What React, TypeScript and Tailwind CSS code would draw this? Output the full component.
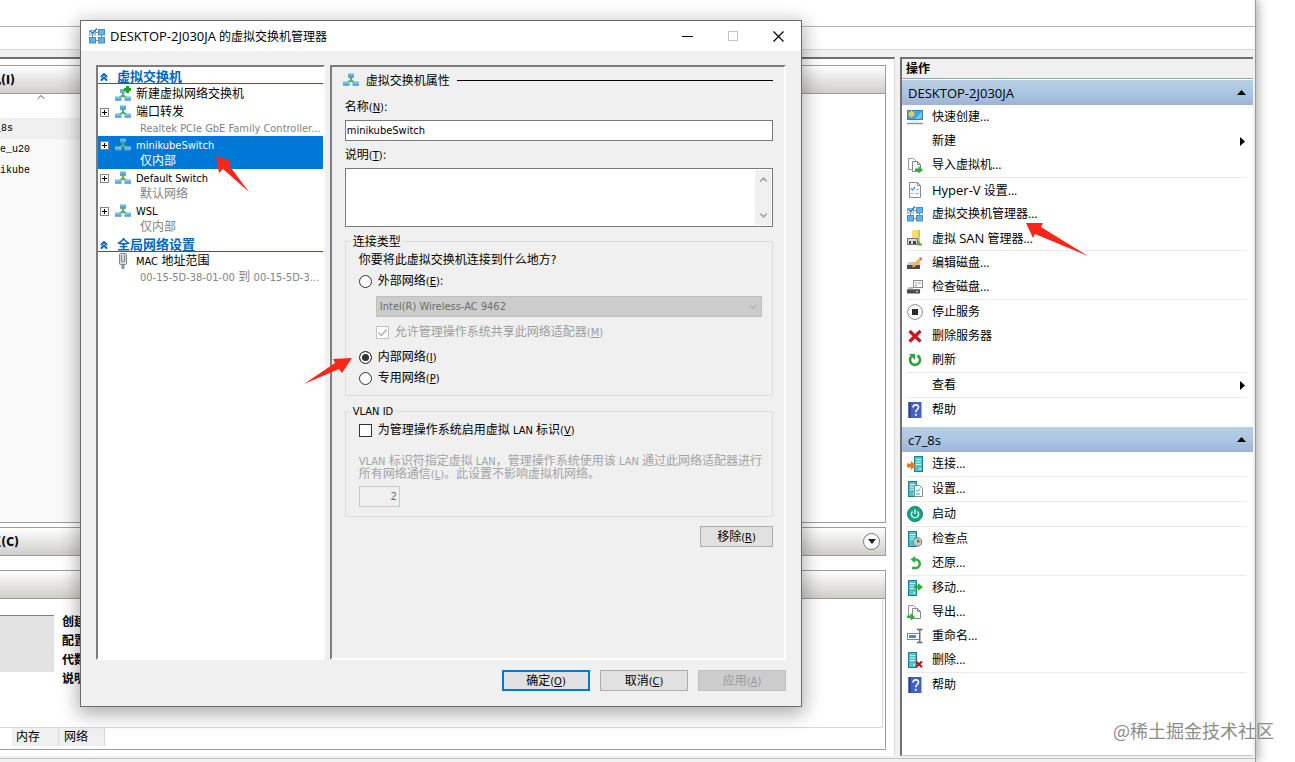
import { useState } from 'react';
import type { ReactNode } from 'react';
import { ChevronDown, ChevronUp, ChevronsUp } from 'lucide-react';

type IconProps = { className?: string };

const SwitchIcon = ({ className = 'h-4 w-4' }: IconProps) => (
  <svg viewBox="0 0 16 16" className={className}>
    <path d="M8 5v5M8 8l-3.500 3M8 8l3.500 3" stroke="#55b748" strokeWidth="2.200" fill="none" />
    <path d="M5 1.500h6v4H5z" fill="#62b4e8" />
    <path d="M5 4.500h6v1H5z" fill="#3c86ba" />
    <path d="M0 9.500h6.500v4H0zM9.500 9.500H16v4H9.500z" fill="#72bdec" />
    <path d="M0 12.500h6.500v1H0zM9.500 12.500H16v1H9.500z" fill="#3c86ba" />
  </svg>
);

const NewSwitchIcon = () => (
  <svg viewBox="0 0 16 16" className="h-4 w-4">
    <path d="M8 6v5M8 9l-3.500 3M8 9l3.500 3" stroke="#55b748" strokeWidth="2.200" fill="none" />
    <path d="M5 3h5v4H5z" fill="#62b4e8" />
    <path d="M0 10.500h6.500v4H0zM9.500 10.500H16v4H9.500z" fill="#72bdec" />
    <path d="M0 13.500h6.500v1H0zM9.500 13.500H16v1H9.500z" fill="#3c86ba" />
    <path d="M12.500 0v7M9 3.500h7" stroke="#17a81f" strokeWidth="3" />
  </svg>
);

const SwitchManagerIcon = () => (
  <svg viewBox="0 0 16 16" className="h-4 w-4">
    <path d="M3.500 7v3M12.500 7v3M6 12.500h4M6 4.500h4" stroke="#8a8a8a" />
    <rect x="0.500" y="2.500" width="6" height="4.500" fill="#fff" stroke="#7fb2d9" />
    <path d="M1.500 3l2.200 2.500L8 .5" stroke="#2a7cc0" strokeWidth="1.500" fill="none" />
    <rect x="9.500" y="1.500" width="6" height="5.500" fill="#5db3f2" stroke="#4b8cc2" />
    <rect x="0.500" y="9.500" width="6" height="5.500" fill="#5db3f2" stroke="#4b8cc2" />
    <rect x="9.500" y="9.500" width="6" height="5.500" fill="#5db3f2" stroke="#4b8cc2" />
  </svg>
);

const MacIcon = () => (
  <svg viewBox="0 0 16 16" className="h-4 w-4">
    <path d="M6.500 11h3v5h-3z" fill="#6d9cc0" />
    <rect x="4.500" y="0.500" width="7" height="11" rx="1" fill="#d5dade" stroke="#7d868d" />
    <path d="M6.500 2v6M9.500 2v6M6.500 8.500h3" stroke="#7d868d" fill="none" />
  </svg>
);

const QuickCreateIcon = () => (
  <svg viewBox="0 0 16 16" className="h-4 w-4">
    <rect x="0.500" y="1.500" width="15" height="9" fill="#36a3ea" stroke="#3b7fae" />
    <path d="M8 10l7-8v8z" fill="#6cc3f5" />
    <path d="M4.500 1v8M.5 5h8M1.700 2.200l5.600 5.600M7.300 2.200L1.700 7.800" stroke="#f0b94a" />
    <circle cx="4.500" cy="5" r="2.600" fill="#ffc94f" />
    <path d="M0 14.500h16" stroke="#8796a1" strokeWidth="1.500" />
    <path d="M4 12h8" stroke="#cfe0ea" />
  </svg>
);

const Pages = () => (
  <>
    <path d="M1.500 1.500h5l2 2v9h-7z" fill="#fafafa" stroke="#999" />
    <path d="M5.500 4.500h5l3 3v7h-8z" fill="#fff" stroke="#888" />
    <path d="M10.500 4.500v3h3" fill="none" stroke="#888" />
  </>
);

const ImportIcon = () => (
  <svg viewBox="0 0 16 16" className="h-4 w-4">
    <Pages />
    <path d="M8 11.500h3.500V9l4.500 4-4.500 3.500V14H8z" fill="#2fae3a" />
  </svg>
);

const ExportIcon = () => (
  <svg viewBox="0 0 16 16" className="h-4 w-4">
    <Pages />
    <path d="M0 11.500h3.500V9L8 13l-4.500 3.500V14H0z" fill="#2fae3a" />
  </svg>
);

const HyperVSettingsIcon = () => (
  <svg viewBox="0 0 16 16" className="h-4 w-4">
    <path d="M2.500.5h8l3 3v12h-11z" fill="#f6f9fb" stroke="#8b8b8b" />
    <path d="M10.500.5v3h3" fill="none" stroke="#8b8b8b" />
    <path d="M4 6.500l1.500 1.500L8 5" fill="none" stroke="#3f9be0" strokeWidth="1.200" />
    <path d="M9 7.500h3M4 11.500h2M8 11.500h4" stroke="#9bb8cc" />
  </svg>
);

const SanIcon = () => (
  <svg viewBox="0 0 16 16" className="h-4 w-4">
    <path d="M5 1l2-1h6v12H5z" fill="#f5df6a" />
    <path d="M11 0h2v12h-2z" fill="#e3c04a" />
    <path d="M12 12v2.500h3" stroke="#4caf3f" strokeWidth="2" fill="none" />
    <rect x="0.500" y="8.500" width="10" height="6" fill="#d9d9d9" stroke="#777" />
    <path d="M2 11h2v3H2zM6 11h3v3H6z" fill="#444" />
  </svg>
);

const EditDiskIcon = () => (
  <svg viewBox="0 0 16 16" className="h-4 w-4">
    <path d="M2 7h11l1 3H0z" fill="#c9c9c9" />
    <path d="M0 10h13v4H0z" fill="#4a4a4a" />
    <path d="M5 12.500L6 9.500l6-6 2 2-6 6z" fill="#f0b545" />
    <path d="M12 3.500l1.500-1.500 2 2L14 5.500z" fill="#d66a5c" />
  </svg>
);

const InspectDiskIcon = () => (
  <svg viewBox="0 0 16 16" className="h-4 w-4">
    <rect x="6.500" y="1.500" width="9" height="7" fill="#fff" stroke="#888" />
    <path d="M8 4h2M11 4h3M8 6.500h2" stroke="#7d93a5" />
    <path d="M2 8h4v2h8l-1 1H0z" fill="#bbb" />
    <path d="M0 10.500h13v4H0z" fill="#4a4a4a" />
    <path d="M9 12.500h2" stroke="#ddd" />
  </svg>
);

const StopIcon = () => (
  <svg viewBox="0 0 16 16" className="h-4 w-4">
    <circle cx="8" cy="8" r="7.400" fill="#fff" stroke="#8a8a8a" />
    <path d="M5 5h6v6H5z" fill="#2b2b2b" />
  </svg>
);

const RemoveIcon = () => (
  <svg viewBox="0 0 16 16" className="h-4 w-4">
    <path d="M2.500 3l11 10.500M13.500 3L2.500 13.500" stroke="#d0141e" strokeWidth="3.200" />
  </svg>
);

const RefreshIcon = () => (
  <svg viewBox="0 0 16 16" className="h-4 w-4">
    <path d="M10.500 3.500a5 5 0 1 1-6 .8" fill="none" stroke="#27a536" strokeWidth="2.600" />
    <path d="M2 2h6v6z" fill="#27a536" />
  </svg>
);

const HelpIcon = () => (
  <svg viewBox="0 0 16 16" className="h-4 w-4">
    <path d="M1.500 0h13v16h-13z" fill="#4161c4" />
    <path d="M1.500 0h2v16h-2z" fill="#2c3f8d" />
    <path d="M6 5.500C6 2 11.500 2 11.500 5.200 11.500 7.500 8.800 7.500 8.800 10.200" stroke="#fff" strokeWidth="1.600" fill="none" />
    <circle cx="8.800" cy="12.800" r="1.100" fill="#fff" />
  </svg>
);

const Server = ({ x = 0 }: { x?: number }) => (
  <>
    <rect x={x + 0.5} y="0.500" width="8" height="15" fill="#45c6cc" stroke="#1f7f92" />
    <path d={`M${x + 2} 3.500h5M${x + 2} 6h5M${x + 2} 8.500h5`} stroke="#d8f7f7" />
    <path d={`M${x + 5} 13h2`} stroke="#fff" />
  </>
);

const ConnectIcon = () => (
  <svg viewBox="0 0 16 16" className="h-4 w-4">
    <Server x={7} />
    <path d="M0 7.500h4V5l5 4.500L4 14v-2.500H0z" fill="#ee7421" />
  </svg>
);

const VmSettingsIcon = () => (
  <svg viewBox="0 0 16 16" className="h-4 w-4">
    <Server x={1} />
    <path d="M7.500 4.500h5l3 3v8h-8z" fill="#f6f9fb" stroke="#8b8b8b" />
    <path d="M9 9l1.500 1.500L13 7.500M9 13h4" fill="none" stroke="#3f9be0" />
  </svg>
);

const PowerIcon = () => (
  <svg viewBox="0 0 16 16" className="h-4 w-4">
    <circle cx="8" cy="8" r="7.500" fill="#17a589" stroke="#0f7f69" />
    <path d="M5.500 5.500a3.600 3.600 0 1 0 5 0M8 3.500V8" stroke="#fff" strokeWidth="1.300" fill="none" />
  </svg>
);

const CheckpointIcon = () => (
  <svg viewBox="0 0 16 16" className="h-4 w-4">
    <Server x={1} />
    <circle cx="10.500" cy="11" r="4.300" fill="#c9c9c9" stroke="#7a7a7a" />
    <path d="M10 11.500V8l3.500 3z" fill="#3b8a3b" />
  </svg>
);

const RevertIcon = () => (
  <svg viewBox="0 0 16 16" className="h-4 w-4">
    <path d="M6 4.500h2.500a4 4 0 0 1 0 8.500H5" fill="none" stroke="#36b03c" strokeWidth="2.600" />
    <path d="M3.500 4.500L8 1v7z" fill="#36b03c" />
  </svg>
);

const MoveIcon = () => (
  <svg viewBox="0 0 16 16" className="h-4 w-4">
    <Server x={1} />
    <path d="M7 5.500h4V3l5 4-5 4V8.500H7z" fill="#2fae3a" />
  </svg>
);

const RenameIcon = () => (
  <svg viewBox="0 0 16 16" className="h-4 w-4">
    <rect x="0.500" y="5.500" width="12" height="6" fill="#fff" stroke="#888" />
    <path d="M2 7h7v3H2z" fill="#3a8fd8" />
    <path d="M10 1.500h5.500M10 14.500h5.500M12.800 1.500v13" stroke="#666" strokeWidth="1.300" />
  </svg>
);

const DeleteVmIcon = () => (
  <svg viewBox="0 0 16 16" className="h-4 w-4">
    <Server x={1} />
    <path d="M9 9.500l6 5.500M15 9.500L9 15" stroke="#c0101c" strokeWidth="2.200" />
  </svg>
);

// Latin runs are set smaller than the Chinese text around them
const Small = ({ children }: { children: ReactNode }) => (
  <span className="text-[11px]">{children}</span>
);

const Key = ({ letter }: { letter: string }) => (
  <span className="text-[11px]">
    (<u className="underline-offset-1">{letter}</u>)
  </span>
);

type Action = {
  label: ReactNode;
  icon?: ReactNode;
  submenu?: boolean;
  last?: boolean;
};

const hostActions: Action[] = [
  { label: '快速创建...', icon: <QuickCreateIcon /> },
  { label: '新建', submenu: true },
  { label: '导入虚拟机...', icon: <ImportIcon />, last: true },
  { label: <><span className="text-[13px]">Hyper-V</span> 设置...</>, icon: <HyperVSettingsIcon /> },
  { label: '虚拟交换机管理器...', icon: <SwitchManagerIcon /> },
  { label: <>虚拟 <span className="text-[13px]">SAN</span> 管理器...</>, icon: <SanIcon />, last: true },
  { label: '编辑磁盘...', icon: <EditDiskIcon /> },
  { label: '检查磁盘...', icon: <InspectDiskIcon />, last: true },
  { label: '停止服务', icon: <StopIcon /> },
  { label: '删除服务器', icon: <RemoveIcon /> },
  { label: '刷新', icon: <RefreshIcon />, last: true },
  { label: '查看', submenu: true, last: true },
  { label: '帮助', icon: <HelpIcon /> },
];

const vmActions: Action[] = [
  { label: '连接...', icon: <ConnectIcon />, last: true },
  { label: '设置...', icon: <VmSettingsIcon />, last: true },
  { label: '启动', icon: <PowerIcon />, last: true },
  { label: '检查点', icon: <CheckpointIcon /> },
  { label: '还原...', icon: <RevertIcon />, last: true },
  { label: '移动...', icon: <MoveIcon /> },
  { label: '导出...', icon: <ExportIcon /> },
  { label: '重命名...', icon: <RenameIcon /> },
  { label: '删除...', icon: <DeleteVmIcon />, last: true },
  { label: '帮助', icon: <HelpIcon /> },
];

const ActionGroup = ({ title, actions }: { title: string; actions: Action[] }) => (
  <section>
    <h3 className="flex h-[25px] items-center justify-between bg-linear-to-b from-[#b9cfe2] via-[#abc6e5] to-[#9fb3d3] pr-[7px] pl-[6px] text-[13px]">
      {title}
      <svg viewBox="0 0 9 5" className="h-[5px] w-[9px]">
        <path d="M0 5L4.500 0 9 5z" fill="#000" />
      </svg>
    </h3>
    <ul>
      {actions.map((action, i) => (
        <li
          key={i}
          className={action.last ? 'mr-[6px] ml-[5px] border-b border-[#ebebeb]' : 'mr-[6px] ml-[5px]'}
        >
          <button className="flex h-6 w-full items-center text-left">
            <span className="mr-[9px] h-4 w-4">{action.icon}</span>
            <span className="flex-1">{action.label}</span>
            {action.submenu && (
              <svg viewBox="0 0 5 9" className="mr-[2px] h-[9px] w-[5px]">
                <path d="M0 0l5 4.500L0 9z" fill="#000" />
              </svg>
            )}
          </button>
        </li>
      ))}
    </ul>
  </section>
);

const TreeHeader = ({ children }: { children: ReactNode }) => (
  <div className="flex h-[17px] items-center border-b border-[#0a66b0] pt-[3px] text-[13px] font-bold text-[#0066c0]">
    <ChevronsUp className="mr-[7px] h-3 w-3" strokeWidth={4} />
    {children}
  </div>
);

type TreeItemProps = {
  icon: ReactNode;
  title: ReactNode;
  detail: ReactNode;
  expandable?: boolean;
  selected?: boolean;
};

const TreeItem = ({ icon, title, detail, expandable, selected }: TreeItemProps) => (
  <li className={selected ? 'bg-[#0078d7] text-white' : ''}>
    <div className="flex h-[17px] items-center pt-px pl-[2px]">
      <span className="mr-[6px] h-[9px] w-[9px]">
        {expandable && (
          <svg viewBox="0 0 9 9" className="h-[9px] w-[9px]">
            <rect x="0.500" y="0.500" width="8" height="8" fill="#fff" stroke="#848484" />
            <path d="M2 4.500h5M4.500 2v5" stroke="#000" />
          </svg>
        )}
      </span>
      {icon}
      <span className="ml-[5px]">{title}</span>
    </div>
    <p
      className={
        selected
          ? 'h-4 pl-[42px] leading-[17px] whitespace-nowrap'
          : 'h-4 pl-[42px] leading-[17px] whitespace-nowrap text-[#838383]'
      }
    >
      {detail}
    </p>
  </li>
);

const radioClass =
  'h-[13px] w-[13px] appearance-none rounded-full border border-[#333] bg-white checked:bg-[#333] checked:shadow-[inset_0_0_0_2px_white]';

const panelClass =
  'border-2 border-t-[#7d7d7d] border-r-white border-b-white border-l-[#7d7d7d]';

const SwitchManagerDialog = () => {
  const [connection, setConnection] = useState('internal');

  return (
    <div
      role="dialog"
      aria-label="虚拟交换机管理器"
      className="absolute top-5 left-20 w-[722px] border border-[#6b6b6b] bg-[#f0f0f0] shadow-[0_5px_18px_2px_rgba(0,0,0,0.33)]"
    >
      <header className="flex h-[30px] items-center bg-white pl-2 font-['Open_Sans','Noto_Sans_CJK_SC',sans-serif]">
        <SwitchManagerIcon />
        <h1 className="ml-[5px] flex-1">
          <span className="text-[13px]">DESKTOP-2J030JA</span> 的虚拟交换机管理器
        </h1>
        <button aria-label="最小化" className="flex h-full w-[45px] items-center justify-center">
          <svg viewBox="0 0 11 11" className="h-[11px] w-[11px]">
            <path d="M0 5.500h11" stroke="#000" />
          </svg>
        </button>
        <button aria-label="最大化" disabled className="flex h-full w-[45px] items-center justify-center">
          <svg viewBox="0 0 11 11" className="h-[11px] w-[11px]">
            <rect x="1.500" y="0.500" width="9" height="9" fill="none" stroke="#c4c4c4" />
          </svg>
        </button>
        <button aria-label="关闭" className="flex h-full w-[46px] items-center justify-center">
          <svg viewBox="0 0 11 11" className="h-[11px] w-[11px]">
            <path d="M.5.5l10 10M10.500.5l-10 10" stroke="#000" strokeWidth="1.200" />
          </svg>
        </button>
      </header>

      <div className="flex min-h-[609px] gap-[5px] px-[15px] pt-[14px]">
        <nav className={`${panelClass} w-[229px] bg-white`}>
          <TreeHeader>虚拟交换机</TreeHeader>
          <div className="flex h-[19px] items-center pt-px pl-[17px]">
            <NewSwitchIcon />
            <span className="ml-[5px]">新建虚拟网络交换机</span>
          </div>
          <ul>
            <TreeItem expandable icon={<SwitchIcon />} title="端口转发" detail={<Small>Realtek PCIe GbE Family Controller...</Small>} />
            <TreeItem expandable selected icon={<SwitchIcon />} title={<Small>minikubeSwitch</Small>} detail="仅内部" />
            <TreeItem expandable icon={<SwitchIcon />} title={<Small>Default Switch</Small>} detail="默认网络" />
            <TreeItem expandable icon={<SwitchIcon />} title={<Small>WSL</Small>} detail="仅内部" />
          </ul>
          <TreeHeader>全局网络设置</TreeHeader>
          <ul>
            <TreeItem
              icon={<MacIcon />}
              title={<><Small>MAC</Small> 地址范围</>}
              detail={<><Small>00-15-5D-38-01-00</Small> 到 <Small>00-15-5D-3...</Small></>}
            />
          </ul>
        </nav>

        <form className={`${panelClass} flex flex-1 flex-col pr-[11px] pl-[13px]`}>
          <div className="flex h-[26px] items-center">
            <SwitchIcon className="-ml-[2px] h-4 w-4" />
            <h2 className="mx-[7px] pt-px">虚拟交换机属性</h2>
            <div className="h-px flex-1 bg-black" />
          </div>

          <label htmlFor="name" className="h-[27px] leading-[29px]">名称<Key letter="N" />:</label>
          <input
            id="name"
            defaultValue="minikubeSwitch"
            className="h-[21px] border border-[#7a7a7a] bg-white px-px text-[11px]"
          />

          <label htmlFor="notes" className="h-[27px] leading-[29px]">说明<Key letter="T" />:</label>
          <div className="flex h-[59px] border border-[#7a7a7a] bg-white p-px">
            <textarea id="notes" className="flex-1 resize-none" />
            <div className="flex w-4 flex-col items-center justify-between bg-[#f0f0f0] py-1 text-[#a8a8a8]">
              <ChevronUp className="h-[11px] w-[11px]" strokeWidth={4} />
              <ChevronDown className="h-[11px] w-[11px]" strokeWidth={4} />
            </div>
          </div>

          <fieldset className="mt-[6px] border border-[#dcdcdc] pr-[10px] pb-[6px] pl-[13px]">
            <legend className="-ml-2 h-4 px-[2px] leading-[18px]">连接类型</legend>
            <p className="h-5 leading-[22px]">你要将此虚拟交换机连接到什么地方?</p>
            <label className="flex h-6 items-center gap-[6px]">
              <input
                type="radio"
                name="connection"
                className={radioClass}
                checked={connection === 'external'}
                onChange={() => setConnection('external')}
              />
              <span className="pt-px">外部网络<Key letter="E" />:</span>
            </label>
            <div className="mt-[3px] ml-[17px] grid items-center">
              <select
                disabled
                aria-label="外部网络适配器"
                className="h-[21px] appearance-none border border-[#bfbfbf] bg-[#cccccc] pl-[3px] text-[11px] text-[#6d6d6d] opacity-100 [grid-area:1/1]"
              >
                <option>Intel(R) Wireless-AC 9462</option>
              </select>
              <ChevronDown className="mr-[3px] h-3 w-3 justify-self-end text-[#9c9c9c] [grid-area:1/1]" />
            </div>
            <label className="ml-[17px] flex h-[30px] items-center gap-[6px] text-[#9d9d9d]">
              <span className="grid">
                <input
                  type="checkbox"
                  disabled
                  defaultChecked
                  className="h-[13px] w-[13px] appearance-none border border-[#c4c4c4] bg-white [grid-area:1/1]"
                />
                <svg viewBox="0 0 13 13" className="h-[13px] w-[13px] [grid-area:1/1]">
                  <path d="M2.500 6.500l3 3 5-6" fill="none" stroke="#b0b0b0" strokeWidth="1.400" />
                </svg>
              </span>
              <span className="pt-px">允许管理操作系统共享此网络适配器<Key letter="M" /></span>
            </label>
            <label className="flex h-5 items-center gap-[6px]">
              <input
                type="radio"
                name="connection"
                className={radioClass}
                checked={connection === 'internal'}
                onChange={() => setConnection('internal')}
              />
              <span className="pt-px">内部网络<Key letter="I" /></span>
            </label>
            <label className="flex h-[22px] items-center gap-[6px]">
              <input
                type="radio"
                name="connection"
                className={radioClass}
                checked={connection === 'private'}
                onChange={() => setConnection('private')}
              />
              <span className="pt-px">专用网络<Key letter="P" /></span>
            </label>
          </fieldset>

          <fieldset className="mt-[7px] border border-[#dcdcdc] pr-[10px] pb-[9px] pl-[13px]">
            <legend className="-ml-2 h-4 px-[2px] text-[11px] leading-[18px]">VLAN ID</legend>
            <label className="flex h-[22px] items-center gap-[6px]">
              <input
                type="checkbox"
                className="h-[13px] w-[13px] appearance-none border border-[#333] bg-white checked:bg-[#333]"
              />
              <span className="pt-px">为管理操作系统启用虚拟<Small> LAN </Small>标识<Key letter="V" /></span>
            </label>
            <label htmlFor="vlan" className="mt-[14px] block leading-[13px] whitespace-nowrap text-[#a3a3a3]">
              <Small>VLAN </Small>标识符指定虚拟<Small> LAN</Small>，管理操作系统使用该<Small> LAN </Small>通过此网络适配器进行
              <br />
              所有网络通信<Key letter="L" />。此设置不影响虚拟机网络。
            </label>
            <input
              id="vlan"
              disabled
              defaultValue="2"
              className="mt-[5px] block h-[21px] w-[41px] border border-[#c8c8c8] bg-[#f0f0f0] pr-[2px] text-right text-[11px] text-[#6d6d6d]"
            />
          </fieldset>

          <button type="button" className="mt-[9px] h-[21px] w-[73px] self-end border border-[#adadad] bg-[#e1e1e1] pt-px">
            移除<Key letter="R" />
          </button>
        </form>
      </div>

      <footer className="flex justify-end gap-[10px] px-[15px] pt-[10px] pb-[15px]">
        <button className="h-[21px] w-[88px] border-2 border-[#0078d7] bg-[#e1e1e1] pt-px leading-4">
          确定<Key letter="O" />
        </button>
        <button className="h-[21px] w-[88px] border border-[#adadad] bg-[#e1e1e1] pt-px">
          取消<Key letter="C" />
        </button>
        <button disabled className="h-[21px] w-[88px] border border-[#bfbfbf] bg-[#cccccc] pt-px text-[#9a9a9a]">
          应用<Key letter="A" />
        </button>
      </footer>
    </div>
  );
};

const bandClass =
  'flex items-center border border-l-0 border-[#9c9c9c] bg-linear-to-b from-white to-[#cfcec9] font-bold';

const RedArrow = ({ className, viewBox, d }: { className: string; viewBox: string; d: string }) => (
  <svg viewBox={viewBox} className={className}>
    <path d={d} fill="#fb2618" />
  </svg>
);

export default function App() {
  return (
    <div className="relative flex min-h-screen overflow-hidden bg-white pr-[39px] font-['DejaVu_Sans_Condensed','Noto_Sans_CJK_SC',sans-serif] text-[12px] leading-4 text-black">
      <div className="flex flex-1 flex-col border-r border-[#9a9a9a] bg-[#f0f0f0] shadow-[2px_0_10px_rgba(0,0,0,0.35)]">
        <div className="h-[27px] border-b border-[#b4b4b4] bg-white" />
        <div className="h-[23px] border-b border-[#d8d8d8] bg-white" />

        <main className="mt-[7px] mb-[2px] flex flex-1 gap-[5px]">
          <div className="flex flex-1 flex-col border-t-2 border-r border-t-[#707070] border-r-[#dadada] bg-white pt-[6px] pr-2 pb-[6px]">
            <div className={`${bandClass} h-[29px]`}>
              <span className="flex w-[15px] justify-end">
                <span className="flex-none">机(I)</span>
              </span>
            </div>
            <div className="flex flex-1 flex-col border-r border-b border-[#9c9c9c]">
              <ChevronUp className="-mt-[3px] mb-[15px] ml-[35px] h-3 w-3 text-[#555]" strokeWidth={2} />
              <ul className="w-20 flex-1 bg-[#f9f9f9] font-['Liberation_Mono',monospace] text-[10px] leading-[21px]">
                <li className="bg-[#f0f0f0]">
                  <span className="flex w-[13px] justify-end">_8s</span>
                </li>
                <li>e_u20</li>
                <li>ikube</li>
              </ul>
            </div>
            <div className={`${bandClass} mt-1 h-[29px] pr-[5px]`}>
              <span className="flex w-[19px] justify-end">
                <span className="flex-none">点(C)</span>
              </span>
              <button
                aria-label="展开检查点"
                className="ml-auto flex h-[17px] w-[17px] items-center justify-center rounded-full border border-[#777] bg-white"
              >
                <svg viewBox="0 0 8 5" className="h-[5px] w-2">
                  <path d="M0 0h8L4 5z" fill="#222" />
                </svg>
              </button>
            </div>
            <div className={`${bandClass} mt-[14px] h-[29px]`} />
            <div className="border-r border-b border-[#9c9c9c]">
              <div className="mr-[2px] flex h-[129px] gap-2 border-r border-b border-[#d8d8d8] pt-4">
                <div className="h-[57px] w-[54px] border-t border-[#808080] bg-[#e3e3e3]" />
                <dl className="-mt-[2px] font-bold leading-[19px]">
                  <dt>创建时间:</dt>
                  <dt>配置版本:</dt>
                  <dt>代数:</dt>
                  <dt>说明:</dt>
                </dl>
              </div>
              <div className="flex h-[21px] pl-3">
                <button className="h-[18px] w-[47px] border-r border-[#d8d8d8] bg-[#f0f0f0] pl-1 text-left">内存</button>
                <button className="h-[18px] w-[46px] border-r border-[#d8d8d8] bg-[#f0f0f0] pl-[5px] text-left">网络</button>
              </div>
            </div>
          </div>

          <aside className="mr-[2px] flex w-[353px] flex-col border-t-2 border-b border-l-2 border-t-[#707070] border-b-[#c8c8c8] border-l-[#707070] bg-white font-['Open_Sans','Noto_Sans_CJK_SC',sans-serif]">
            <h2 className="mb-px flex h-5 items-center border-b border-[#8fa5bb] bg-[#f0f0f0] pl-1 font-bold">操作</h2>
            <ActionGroup title="DESKTOP-2J030JA" actions={hostActions} />
            <div className="h-[5px]" />
            <ActionGroup title="c7_8s" actions={vmActions} />
          </aside>
        </main>
        <div className="h-1 border-t border-[#c4c4c4]" />
      </div>

      <SwitchManagerDialog />

      <RedArrow className="absolute top-[156px] left-[216px] h-9 w-[33px]" viewBox="0 0 33 36" d="M0 0l15 5-2 4 20 27L7 13l-4 4z" />
      <RedArrow className="absolute top-[223px] left-[1026px] h-[33px] w-[62px]" viewBox="0 0 62 33" d="M0 0h17l-2 4 47 29L9 11l-2 4z" />
      <RedArrow className="absolute top-[358px] left-[304px] h-[26px] w-12" viewBox="0 0 48 26" d="M48 0L38 15l-3-4L0 26 31 5l-2-4z" />

      <p className="absolute right-[21px] bottom-5 font-['Noto_Sans_CJK_SC',sans-serif] text-[18px] leading-6 text-[#8c8c8c]">
        @稀土掘金技术社区
      </p>
    </div>
  );
}
